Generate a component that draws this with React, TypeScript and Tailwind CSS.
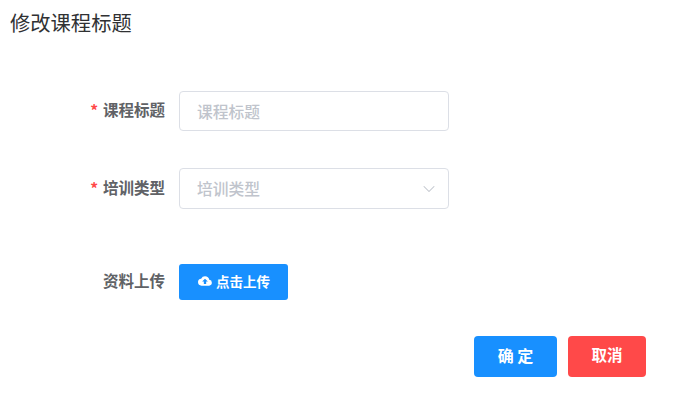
import { ChevronDown } from 'lucide-react'

const FONT = "font-['Noto_Sans_CJK_SC','Noto_Sans',sans-serif]"

function FormRow({ label, required, children, className }: { label: string; required?: boolean; children: React.ReactNode; className: string }) {
  return (
    <div className={`flex items-center ${className}`}>
      <label className="w-[179px] pr-[14px] pb-[4px] text-right text-[15.5px] leading-[22px] font-bold text-[#606266]">
        {required && <span className="relative top-[1px] mr-[5px] text-[#ff4949]">*</span>}
        {label}
      </label>
      {children}
    </div>
  )
}

export default function App() {
  return (
    <div className={`h-[401px] w-[685px] overflow-hidden bg-white ${FONT}`}>
      <h2 className="pl-[10px] pt-[8px] text-[20.3px] leading-[28px] text-[#303133]">修改课程标题</h2>

      <FormRow label="课程标题" required className="mt-[55px]">
        <input
          placeholder="课程标题"
          className="h-[40px] w-[270px] rounded border border-[#dcdfe6] bg-white px-[17px] text-[15.75px] font-medium text-[#606266] outline-none placeholder:text-[#c0c4cc]"
        />
      </FormRow>

      <FormRow label="培训类型" required className="mt-[37px]">
        <div className="flex h-[41px] w-[270px] items-center justify-between rounded border border-[#dcdfe6] pl-[17px] pr-[9px] text-[15.75px] font-medium text-[#c0c4cc]">
          <span>培训类型</span>
          <ChevronDown size={20} strokeWidth={1.25} className="text-[#c0c4cc]" />
        </div>
      </FormRow>

      <FormRow label="资料上传" className="mt-[55px]">
        <button className="flex h-[36px] w-[109px] items-center gap-[4px] rounded-[3px] bg-[#1890ff] pb-[2px] pl-[19px] text-[13.5px] font-bold text-white">
          <svg viewBox="0 0 24 24" className="h-[14px] w-[14px]" fill="currentColor">
            <path d="M19.35 10.04A7.49 7.49 0 0 0 12 4a7.5 7.5 0 0 0-6.65 4.04A6 6 0 0 0 6 20h13a5 5 0 0 0 .35-9.96zM14 13v4h-4v-4H7l5-5 5 5h-3z" />
          </svg>
          点击上传
        </button>
      </FormRow>

      <div className="mt-[36px] flex justify-end gap-[11px] pr-[39px]">
        <button className="h-[41px] w-[83px] rounded bg-[#1890ff] pb-[3px] text-[16px] font-bold text-white">确 定</button>
        <button className="h-[41px] w-[78px] rounded bg-[#ff4949] pb-[3px] text-[15.5px] font-bold text-white">取消</button>
      </div>
    </div>
  )
}
